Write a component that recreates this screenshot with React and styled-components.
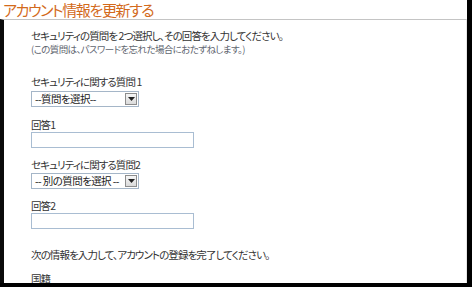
import React from "react";
import styled, { createGlobalStyle } from "styled-components";

const GlobalStyle = createGlobalStyle`
  html, body { margin: 0; padding: 0; background: #000; }
  body { font-family: "Noto Sans CJK JP", "Noto Sans", sans-serif; }
`;

const Frame = styled.div`
  width: 467px;
  height: 283px;
  background: #fff;
  overflow: hidden;
  display: flex;
  flex-direction: column;
`;

const Title = styled.h1`
  margin: 0;
  height: 19px;
  padding-left: 3px;
  font-size: 15px;
  line-height: 19px;
  font-weight: 400;
  color: #d36a1c;
  font-feature-settings: "palt";
  letter-spacing: -1.4px;
  white-space: nowrap;
`;

const Panel = styled.div`
  flex: 1;
  border-top: 1px solid #c4c4c4;
  border-left: 4px solid #0a0a0a;
  border-right: 1px solid #e6e6e6;
  padding: 9px 0 0 27px;
  color: #333;
  font-size: 10.5px;
  font-feature-settings: "palt";
  letter-spacing: -0.9px;
`;

const Text = styled.p`
  margin: ${(p) => p.$mt || 0}px 0 0;
  line-height: ${(p) => p.$lh || 14}px;
  font-size: ${(p) => p.$size || 10.5}px;
  letter-spacing: ${(p) => p.$ls ?? -0.9}px;
  color: ${(p) => p.$color || "#333"};
  white-space: nowrap;
`;

const Field = styled.div`
  margin-top: ${(p) => p.$mt}px;
  display: flex;
  flex-direction: column;
  align-items: flex-start;
`;

const Label = styled.label`
  line-height: 14px;
  font-size: 10.5px;
  color: #333;
  white-space: pre;
  margin-bottom: ${(p) => p.$mb || 0}px;
`;

const SelectBox = styled.div`
  width: 103px;
  height: 14px;
  border: 1px solid #a5b6c8;
  display: flex;
  align-items: center;
  justify-content: space-between;
  background: #fff;
  padding-left: 3px;
  box-sizing: content-box;
  font-size: 10.5px;
  letter-spacing: -0.6px;
  color: #222;
  line-height: 14px;
  white-space: pre;
  overflow: hidden;
`;

const Arrow = styled.span`
  flex: none;
  width: 12px;
  height: 12px;
  margin-right: 1px;
  border: 1px solid #8d8d8d;
  background: linear-gradient(#f6f6f6, #dadada);
  display: flex;
  align-items: center;
  justify-content: center;
  box-sizing: border-box;
`;

const Input = styled.div`
  width: 161px;
  height: 14px;
  border: 1px solid #a9bdd2;
  background: #fff;
`;

const ArrowIcon = () => (
  <svg width="7" height="4" viewBox="0 0 7 4">
    <path d="M0 0h7L3.5 4z" fill="#222" />
  </svg>
);

const Select = ({ text }) => (
  <SelectBox>
    <span>{text}</span>
    <Arrow>
      <ArrowIcon />
    </Arrow>
  </SelectBox>
);

export default function App() {
  return (
    <>
      <GlobalStyle />
      <Frame>
        <Title>アカウント情報を更新する</Title>
        <Panel>
          <Text>セキュリティの質問を 2つ選択し、その回答を入力してください。</Text>
          <Text $size={9.5} $lh={13} $ls={-0.6} $color="#5f6670">
            (この質問は、パスワードを忘れた場合におたずねします。)
          </Text>
          <Field $mt={19}>
            <Label $mb={2}>セキュリティに関する質問 1</Label>
            <Select text="--質問を選択--" />
          </Field>
          <Field $mt={11}>
            <Label>回答1</Label>
            <Input />
          </Field>
          <Field $mt={10}>
            <Label $mb={1}>セキュリティに関する質問2</Label>
            <Select text="-- 別の質問を選択 --" />
          </Field>
          <Field $mt={10}>
            <Label>回答2</Label>
            <Input />
          </Field>
          <Text $mt={19}>次の情報を入力して、アカウントの登録を完了してください。</Text>
          <Field $mt={10}>
            <Label>国籍</Label>
          </Field>
        </Panel>
      </Frame>
    </>
  );
}
